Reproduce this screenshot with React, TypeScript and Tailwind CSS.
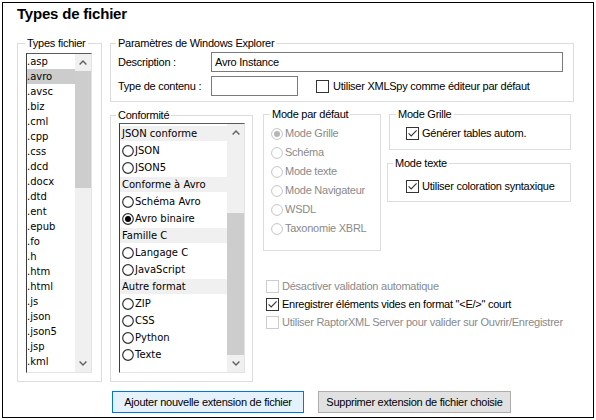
import React from "react";

const types = [
  ".asp", ".avro", ".avsc", ".biz", ".cml", ".cpp", ".css", ".dcd", ".docx", ".dtd", ".ent",
  ".epub", ".fo", ".h", ".htm", ".html", ".js", ".json", ".json5", ".jsp", ".kml",
];

type ConfItem = { kind: "h" | "r"; label: string; checked?: boolean };
const conf: ConfItem[] = [
  { kind: "h", label: "JSON conforme" },
  { kind: "r", label: "JSON" },
  { kind: "r", label: "JSON5" },
  { kind: "h", label: "Conforme à Avro" },
  { kind: "r", label: "Schéma Avro" },
  { kind: "r", label: "Avro binaire", checked: true },
  { kind: "h", label: "Famille C" },
  { kind: "r", label: "Langage C" },
  { kind: "r", label: "JavaScript" },
  { kind: "h", label: "Autre format" },
  { kind: "r", label: "ZIP" },
  { kind: "r", label: "CSS" },
  { kind: "r", label: "Python" },
  { kind: "r", label: "Texte" },
];

const modes = ["Mode Grille", "Schéma", "Mode texte", "Mode Navigateur", "WSDL", "Taxonomie XBRL"];

function ChevronUp() {
  return (
    <svg width="8" height="5" viewBox="0 0 8 5">
      <path d="M0.6 4.4L4 1L7.4 4.4" fill="none" stroke="#606060" strokeWidth="1.4" />
    </svg>
  );
}

function ChevronDown() {
  return (
    <svg width="8" height="5" viewBox="0 0 8 5">
      <path d="M0.6 0.6L4 4L7.4 0.6" fill="none" stroke="#606060" strokeWidth="1.4" />
    </svg>
  );
}

function Scrollbar({ className, spacerClass, thumbClass }: { className: string; spacerClass: string; thumbClass: string }) {
  return (
    <div className={`flex flex-col bg-[#f0f0f0] shrink-0 ${className}`}>
      <div className="h-[17px] flex items-center justify-center shrink-0">
        <ChevronUp />
      </div>
      <div className={spacerClass} />
      <div className={`bg-[#cdcdcd] shrink-0 ${thumbClass}`} />
      <div className="flex-1" />
      <div className="h-[17px] flex items-center justify-center shrink-0">
        <ChevronDown />
      </div>
    </div>
  );
}

function CheckBox({ checked, disabled }: { checked?: boolean; disabled?: boolean }) {
  return (
    <span
      className={`w-[13px] h-[13px] border bg-white flex items-center justify-center shrink-0 ${
        disabled ? "border-[#cccccc]" : "border-[#333333]"
      }`}
    >
      {checked && (
        <svg width="11" height="11" viewBox="0 0 11 11">
          <path d="M1.6 5.4L4.2 8L9.6 2.4" fill="none" stroke="#333333" strokeWidth="1.1" />
        </svg>
      )}
    </span>
  );
}

function Radio({ checked }: { checked?: boolean }) {
  return (
    <svg width="12" height="12" viewBox="0 0 12 12" className="shrink-0">
      <circle cx="6" cy="6" r="5.3" fill="white" stroke="#333333" strokeWidth="1.2" />
      {checked && <circle cx="6" cy="6" r="3" fill="#000000" />}
    </svg>
  );
}

function DisabledRadio({ checked }: { checked?: boolean }) {
  return (
    <svg width="12" height="12" viewBox="0 0 12 12" className="shrink-0">
      <circle cx="6" cy="6" r="5.4" fill="white" stroke="#c4c4c4" strokeWidth="1" />
      {checked && <circle cx="6" cy="6" r="3" fill="#b5b5b5" />}
    </svg>
  );
}

function Group({
  label,
  className,
  legendClass,
  children,
}: {
  label: string;
  className: string;
  legendClass: string;
  children?: React.ReactNode;
}) {
  return (
    <fieldset className={`border border-[#dcdcdc] shrink-0 ${className}`}>
      <legend className={`px-[2px] leading-[13px] ${legendClass}`}>{label}</legend>
      {children}
    </fieldset>
  );
}

export default function App() {
  return (
    <div className="w-[596px] h-[420px] bg-white pt-[2px] pl-[2px] font-['Liberation_Sans',Arial,sans-serif] text-[11px] tracking-[-0.25px] text-black">
      <div className="w-[592px] h-[416px] border border-black pl-[14px] pt-[2px]">
        <div className="h-[18px] leading-[18px] text-[15px] font-bold tracking-[-0.2px]">Types de fichier</div>

        <div className="mt-[14px] flex gap-[8px] items-start">
          {/* Types fichier */}
          <Group label="Types fichier" className="w-[85px] h-[345px]" legendClass="ml-[7px]">
            <div className="mt-[3px] ml-[8px] w-[66px] h-[320px] border border-l-[#3c3c3c] border-t-[#5a5a5a] border-r-[#e3e3e3] border-b-[#e3e3e3] flex">
              <div className="w-[48px] overflow-hidden font-['DejaVu_Sans',sans-serif] text-[10px] tracking-normal">
                {types.map((t) => (
                  <div key={t} className={`h-[15px] leading-[15px] ${t === ".avro" ? "bg-[#cccccc]" : ""}`}>
                    {t}
                  </div>
                ))}
              </div>
              <Scrollbar className="w-[16px]" spacerClass="h-0" thumbClass="h-[117px]" />
            </div>
          </Group>

          {/* Right column */}
          <div className="w-[464px] flex flex-col">
            <Group label="Paramètres de Windows Explorer" className="w-[464px] h-[65px]" legendClass="ml-[5px]">
              <div className="mt-[2px] flex items-center h-[20px]">
                <div className="w-[100px] pl-[7px]">Description :</div>
                <div className="w-[352px] h-[20px] border border-[#7a7a7a] pl-[3px] flex items-center">Avro Instance</div>
              </div>
              <div className="mt-[4px] flex items-center h-[20px]">
                <div className="w-[100px] pl-[7px]">Type de contenu :</div>
                <div className="w-[87px] h-[20px] border border-[#7a7a7a]" />
                <div className="ml-[18px] flex items-center gap-[4px]">
                  <CheckBox />
                  <span>Utiliser XMLSpy comme éditeur par défaut</span>
                </div>
              </div>
            </Group>

            <div className="mt-[6px] flex items-start">
              {/* Conformité */}
              <Group label="Conformité" className="mt-[1px] w-[143px] h-[273px]" legendClass="ml-[5px]">
                <div className="mt-[1px] ml-[8px] w-[126px] h-[250px] border border-l-[#3c3c3c] border-t-[#5a5a5a] border-r-[#e3e3e3] border-b-[#e3e3e3] flex">
                  <div className="w-[107px] pt-[1px] overflow-hidden font-['DejaVu_Sans',sans-serif] text-[10px] tracking-normal">
                    {conf.map((c) =>
                      c.kind === "h" ? (
                        <div key={c.label} className="h-[17px] py-[1px]">
                          <div className="h-[15px] bg-[#f0f0f0] pl-[2px] flex items-center">{c.label}</div>
                        </div>
                      ) : (
                        <div key={c.label} className="h-[17px] pl-[2px] flex items-center gap-[1px]">
                          <Radio checked={c.checked} />
                          <span>{c.label}</span>
                        </div>
                      )
                    )}
                  </div>
                  <Scrollbar className="w-[17px]" spacerClass="h-[72px] shrink-0" thumbClass="h-[142px]" />
                </div>
              </Group>

              {/* Right area */}
              <div className="ml-[10px] flex flex-col">
                <div className="flex items-start">
                  <Group label="Mode par défaut" className="w-[118px] h-[143px]" legendClass="ml-[6px]">
                    <div className="mt-[3px] ml-[7px] text-[#8a8a8a]">
                      {modes.map((m, i) => (
                        <div key={m} className="h-[19px] flex items-center gap-[2px]">
                          <DisabledRadio checked={i === 0} />
                          <span>{m}</span>
                        </div>
                      ))}
                    </div>
                  </Group>
                  <div className="ml-[6px] flex flex-col">
                    <Group label="Mode Grille" className="ml-[2px] w-[182px] h-[42px]" legendClass="ml-[6px]">
                      <div className="mt-[6px] ml-[16px] flex items-center gap-[3px] h-[13px]">
                        <CheckBox checked />
                        <span>Générer tables autom.</span>
                      </div>
                    </Group>
                    <Group label="Mode texte" className="mt-[7px] w-[184px] h-[45px]" legendClass="ml-[5px]">
                      <div className="mt-[10px] ml-[18px] flex items-center gap-[3px] h-[13px]">
                        <CheckBox checked />
                        <span>Utiliser coloration syntaxique</span>
                      </div>
                    </Group>
                  </div>
                </div>

                <div className="mt-[26px] ml-[3px] flex flex-col">
                  <div className="h-[18px] flex items-center gap-[3px] text-[#8a8a8a]">
                    <CheckBox disabled />
                    <span>Désactiver validation automatique</span>
                  </div>
                  <div className="h-[18px] flex items-center gap-[3px]">
                    <CheckBox checked />
                    <span>Enregistrer éléments vides en format "&lt;E/&gt;" court</span>
                  </div>
                  <div className="h-[18px] flex items-center gap-[3px] text-[#8a8a8a] whitespace-nowrap">
                    <CheckBox disabled />
                    <span>Utiliser RaptorXML Server pour valider sur Ouvrir/Enregistrer</span>
                  </div>
                </div>
              </div>
            </div>
          </div>
        </div>

        <div className="mt-[9px] ml-[95px] flex gap-[14px]">
          <div className="w-[192px] h-[22px] border border-[#0078d7] bg-[#e5f1fb] flex items-center justify-center">
            Ajouter nouvelle extension de fichier
          </div>
          <div className="w-[193px] h-[22px] border border-[#adadad] bg-[#e1e1e1] flex items-center justify-center">
            Supprimer extension de fichier choisie
          </div>
        </div>
      </div>
    </div>
  );
}
